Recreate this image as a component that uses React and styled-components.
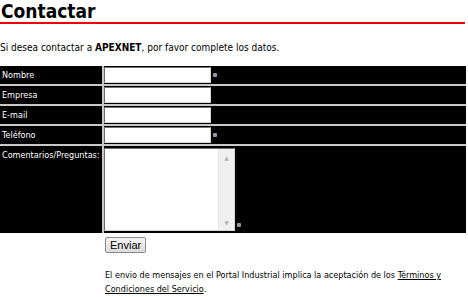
import React from 'react';
import styled, { createGlobalStyle } from 'styled-components';

const GlobalStyle = createGlobalStyle`
  html, body {
    margin: 0;
    padding: 0;
    background: #ffffff;
    font-family: "DejaVu Sans Condensed", "DejaVu Sans", Verdana, sans-serif;
    color: #000000;
  }
`;

const Page = styled.div`
  width: 468px;
  height: 297px;
  overflow: hidden;
`;

const Title = styled.h1`
  margin: 0;
  padding: 1px 0 1px 1px;
  font-size: 19px;
  line-height: 20px;
  font-weight: bold;
  border-bottom: 2px solid #ee0000;
  width: 464px;
`;

const Intro = styled.p`
  margin: 17px 0 0 0;
  font-size: 10px;
  line-height: 14px;
`;

const FormGrid = styled.div`
  margin-top: 11px;
  width: 466px;
  display: grid;
  grid-template-columns: 102px 1fr;
  grid-template-rows: repeat(4, 18px) 87px;
  gap: 2px;
  background: #c8c8c8;
`;

const Label = styled.div`
  background: #000000;
  color: #ffffff;
  font-size: 9px;
  line-height: 18px;
  padding-left: 2px;
  white-space: nowrap;
  ${(p) => p.$tall && 'line-height: 14px; padding-top: 2px;'}
`;

const Field = styled.div`
  background: #000000;
  display: flex;
  align-items: ${(p) => (p.$tall ? 'flex-end' : 'center')};
  ${(p) => p.$tall && 'padding: 2px 0;'}
`;

const TextInput = styled.input`
  box-sizing: border-box;
  width: 107px;
  height: 16px;
  margin: 0;
  padding: 0 2px;
  border: 1px solid #6d6d6d;
  border-right-color: #d4d4d4;
  border-bottom-color: #d4d4d4;
  background: #ffffff;
  font-size: 10px;
  outline: none;
`;

const AreaBox = styled.div`
  box-sizing: border-box;
  width: 131px;
  height: 83px;
  display: flex;
  border: 1px solid #6d6d6d;
  border-right-color: #d4d4d4;
  border-bottom-color: #d4d4d4;
  background: #ffffff;
`;

const Area = styled.textarea`
  flex: 1;
  min-width: 0;
  border: none;
  resize: none;
  margin: 0;
  padding: 2px;
  font-size: 10px;
  outline: none;
  overflow: hidden;
`;

const Scroll = styled.div`
  width: 16px;
  background: #f0f0f0;
  border-left: 1px solid #e6e6e6;
  display: flex;
  flex-direction: column;
  justify-content: space-between;
  align-items: center;
  font-size: 6px;
  color: #b0b0b0;
  padding: 5px 0 4px;
  box-sizing: border-box;
`;

const Required = styled.span`
  display: inline-block;
  width: 4px;
  height: 4px;
  margin-left: 2px;
  background: #8a98a8;
  border-radius: 1px;
  ${(p) => p.$tall && 'margin-bottom: 4px;'}
`;

const ButtonRow = styled.div`
  padding: 1px 0 0 105px;
`;

const Button = styled.button`
  box-sizing: border-box;
  height: 16px;
  padding: 0 4px;
  font-family: Arial, "Liberation Sans", sans-serif;
  font-size: 11px;
  line-height: 14px;
  color: #000000;
  border: 1px solid #8a8a8a;
  border-radius: 2px;
  background: linear-gradient(#f7f7f7, #dcdcdc);
`;

const Note = styled.p`
  margin: 15px 0 0 105px;
  width: 345px;
  font-size: 9px;
  line-height: 14px;
`;

const NoteLink = styled.a`
  color: #000000;
  text-decoration: underline;
`;

const fields = [
  { label: 'Nombre', required: true },
  { label: 'Empresa' },
  { label: 'E-mail' },
  { label: 'Teléfono', required: true },
];

export default function App() {
  return (
    <Page>
      <GlobalStyle />
      <Title>Contactar</Title>
      <Intro>
        Si desea contactar a <b>APEXNET</b>, por favor complete los datos.
      </Intro>

      <FormGrid>
        {fields.map((f) => (
          <React.Fragment key={f.label}>
            <Label>{f.label}</Label>
            <Field>
              <TextInput type="text" />
              {f.required && <Required />}
            </Field>
          </React.Fragment>
        ))}
        <Label $tall>Comentarios/Preguntas:</Label>
        <Field $tall>
          <AreaBox>
            <Area />
            <Scroll>
              <span>▲</span>
              <span>▼</span>
            </Scroll>
          </AreaBox>
          <Required $tall />
        </Field>
      </FormGrid>

      <ButtonRow>
        <Button type="button">Enviar</Button>
      </ButtonRow>

      <Note>
        El envio de mensajes en el Portal Industrial implica la aceptación de los{' '}
        <NoteLink href="#">Términos y Condiciones del Servicio</NoteLink>.
      </Note>
    </Page>
  );
}
